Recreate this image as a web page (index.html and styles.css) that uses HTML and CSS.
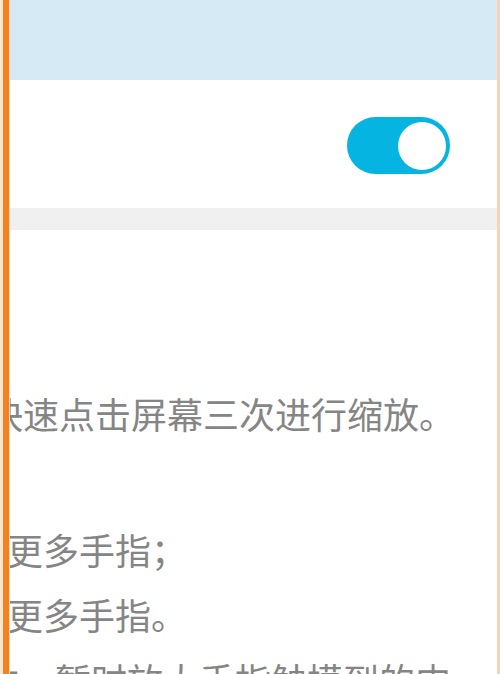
FILE: index.html
```html
<!DOCTYPE html>
<html lang="zh-CN">
<head>
<meta charset="utf-8">
<title>放大手势</title>
<link rel="stylesheet" href="styles.css">
</head>
<body>
<div class="frame">
  <div class="edge"></div>
  <div class="screen">
    <div class="header"></div>
    <div class="switch-row">
      <div class="toggle"><span class="knob"></span></div>
    </div>
    <div class="divider"></div>
    <div class="content">
      <p class="line line-a">快速点击屏幕三次进行缩放。</p>
      <p class="line line-gap"></p>
      <p class="line line-b">更多手指；</p>
      <p class="line line-b">更多手指。</p>
      <p class="line line-c">住，暂时放大手指触摸到的内</p>
    </div>
  </div>
</div>
</body>
</html>
```
FILE: styles.css
```css
html, body {
  margin: 0;
  padding: 0;
  background: #ffffff;
}
body {
  width: 500px;
  height: 674px;
  overflow: hidden;
  font-family: "Noto Sans CJK SC", "Noto Sans", sans-serif;
}
.frame {
  display: flex;
  width: 500px;
  height: 674px;
}
.edge {
  width: 6px;
  flex: none;
  background: #f5821f;
  border-left: 3px solid #fbe6d2;
  border-right: 1px solid #fbd9b8;
}
.screen {
  flex: 1;
  min-width: 0;
  overflow: hidden;
  display: flex;
  flex-direction: column;
  border-right: 3px solid #f8d3ad;
}
.header {
  height: 80px;
  flex: none;
  background: #d6eaf6;
}
.switch-row {
  height: 128px;
  flex: none;
  display: flex;
  align-items: center;
  justify-content: flex-end;
  padding-right: 47px;
  background: #ffffff;
}
.toggle {
  width: 103px;
  height: 57px;
  border-radius: 29px;
  background: #06b4e2;
  display: flex;
  align-items: center;
  justify-content: flex-end;
  padding-right: 4px;
  box-sizing: border-box;
  margin-top: 3px;
}
.knob {
  width: 48px;
  height: 48px;
  border-radius: 50%;
  background: #ffffff;
}
.divider {
  height: 22px;
  flex: none;
  background: #f0f0f0;
}
.content {
  padding-top: 151px;
}
.line {
  margin: 0;
  height: 65px;
  line-height: 65px;
  font-size: 36px;
  color: #858585;
  white-space: nowrap;
}
.line-gap {
  margin-bottom: 6px;
}
.line-a {
  margin-left: -23px;
}
.line-b {
  margin-left: -3px;
}
.line-c {
  margin-left: -27px;
}
```
